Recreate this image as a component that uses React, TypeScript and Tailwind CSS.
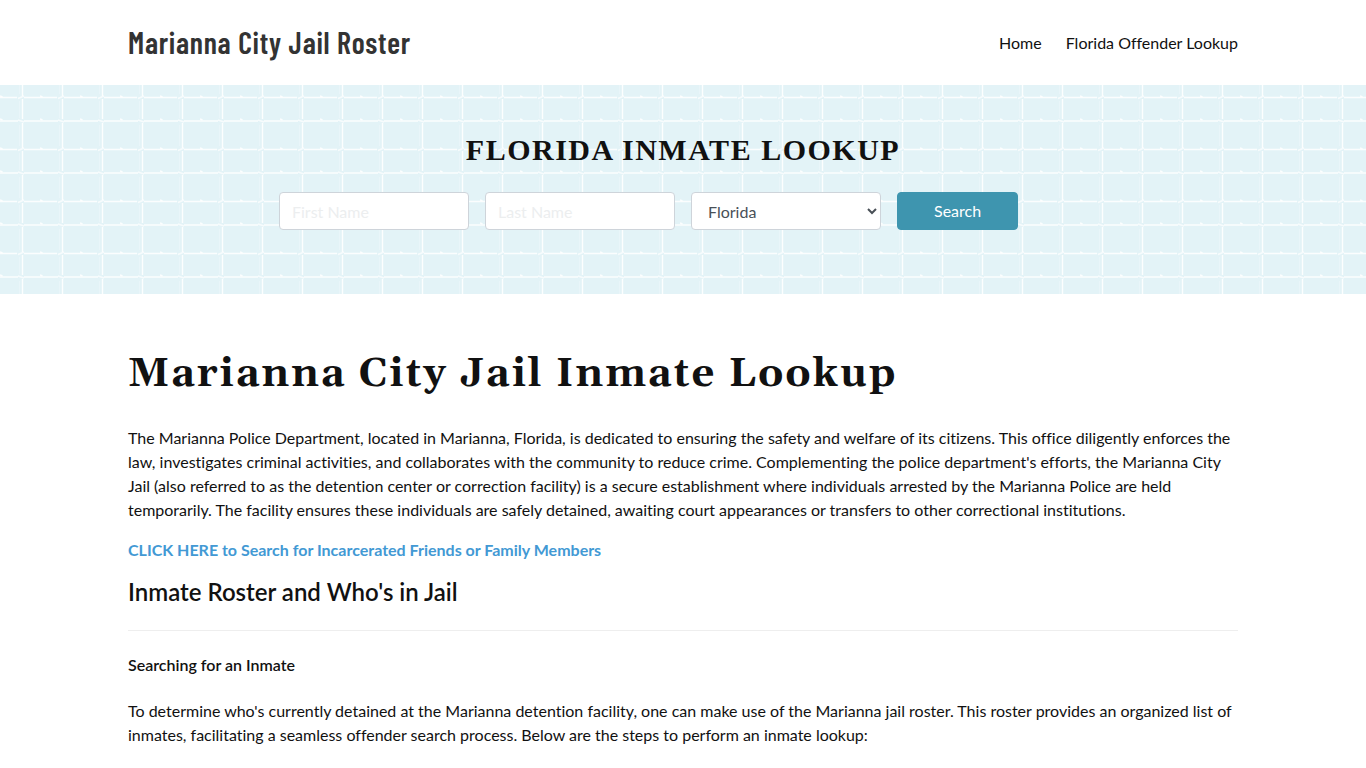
import { useState } from 'react';

const navLinks = [
  { label: 'Home', href: '#home' },
  { label: 'Florida Offender Lookup', href: '#lookup' },
];

const states = ['Alabama', 'Florida', 'Georgia', 'Louisiana', 'Mississippi', 'Texas'];

const fieldClass =
  'h-[38px] w-full min-w-0 rounded border border-[#ced4da] bg-white text-base text-[#495057] placeholder:text-[#eceeef] focus:border-[#3e95af] focus:outline-none';

// Repeating tile behind the search form
function TilePattern() {
  return (
    <svg className="absolute inset-0 h-full w-full" aria-hidden="true">
      <defs>
        <pattern id="tiles" width="40" height="52" patternUnits="userSpaceOnUse">
          <g fill="none" stroke="#fff">
            <path d="M22.5 0V11M22.5 14V34M22.5 38V52" strokeWidth="1.4" opacity="0.9" />
            <path d="M19.5 0V9M19.5 16V33M19.5 40V52" strokeWidth="1" opacity="0.2" />
            <path d="M24 12.5H40M0 12.5H17" strokeWidth="1.4" opacity="0.85" />
            <path d="M24 36H40M0 36H18" strokeWidth="1.4" opacity="0.85" />
            <path d="M18 13.5L24 11M18 35L24 37" strokeWidth="1.6" opacity="0.7" />
            <path d="M0 11L2.5 12M0 34L2.5 35" strokeWidth="1.6" opacity="0.9" />
          </g>
        </pattern>
      </defs>
      <rect width="100%" height="100%" fill="url(#tiles)" />
    </svg>
  );
}

export default function App() {
  const [firstName, setFirstName] = useState('');
  const [lastName, setLastName] = useState('');
  const [region, setRegion] = useState('Florida');

  return (
    <div className="min-h-screen bg-white font-['Lato','Liberation_Sans',sans-serif] text-base text-[#111] [font-variant-ligatures:no-common-ligatures]">
      <header className="mx-auto flex h-[85px] max-w-[1140px] items-center justify-between px-[15px]">
        <a
          href="#home"
          className="pb-0.5 font-['Barlow_Condensed','Roboto_Condensed','Liberation_Sans_Narrow',sans-serif] text-[30px] leading-9 font-semibold tracking-wide text-[#333]"
        >
          Marianna City Jail Roster
        </a>
        <nav className="flex gap-6">
          {navLinks.map((link) => (
            <a key={link.label} href={link.href} className="hover:text-[#3e95af]">
              {link.label}
            </a>
          ))}
        </nav>
      </header>

      <section className="relative bg-[#e3f3f7] pt-12 pb-16">
        <TilePattern />
        <div className="relative mx-auto max-w-[824px] px-2">
          <h2 className="mb-[26px] text-center font-['Liberation_Serif',serif] text-[30px] leading-[33px] font-bold tracking-wider uppercase">
            Florida Inmate Lookup
          </h2>
          <form className="grid grid-cols-4 gap-4" onSubmit={(e) => e.preventDefault()}>
            <input
              type="text"
              aria-label="First Name"
              placeholder="First Name"
              value={firstName}
              onChange={(e) => setFirstName(e.target.value)}
              className={`${fieldClass} px-3`}
            />
            <input
              type="text"
              aria-label="Last Name"
              placeholder="Last Name"
              value={lastName}
              onChange={(e) => setLastName(e.target.value)}
              className={`${fieldClass} px-3`}
            />
            <select
              aria-label="State"
              value={region}
              onChange={(e) => setRegion(e.target.value)}
              className={`${fieldClass} pl-3`}
            >
              {states.map((s) => (
                <option key={s}>{s}</option>
              ))}
            </select>
            <button
              type="submit"
              className="h-[38px] justify-self-start rounded border border-[#3e95af] bg-[#3e95af] px-9 text-white hover:bg-[#347f96]"
            >
              Search
            </button>
          </form>
        </div>
      </section>

      <main className="mx-auto max-w-[1140px] px-[15px] pt-[53px] pb-4">
        <h1 className="mb-[23px] font-['Gelasio',Georgia,'Liberation_Serif',serif] text-[40px] leading-[56px] font-bold tracking-wider">
          Marianna City Jail Inmate Lookup
        </h1>
        <p className="mb-4">
          The Marianna Police Department, located in Marianna, Florida, is dedicated to ensuring the safety and
          welfare of its citizens. This office diligently enforces the law, investigates criminal activities, and
          collaborates with the community to reduce crime. Complementing the police department's efforts, the
          Marianna City Jail (also referred to as the detention center or correction facility) is a secure
          establishment where individuals arrested by the Marianna Police are held temporarily. The facility ensures
          these individuals are safely detained, awaiting court appearances or transfers to other correctional
          institutions.
        </p>
        <p className="mb-4">
          <a href="#search" className="font-bold text-[#4299d4] hover:underline">
            CLICK HERE to Search for Incarcerated Friends or Family Members
          </a>
        </p>
        <h2 className="mb-6 text-2xl leading-7 font-semibold">Inmate Roster and Who's in Jail</h2>
        <hr className="mb-[22px] border-[#eee]" />
        <h3 className="mb-[22px] font-semibold">Searching for an Inmate</h3>
        <p>
          To determine who's currently detained at the Marianna detention facility, one can make use of the Marianna
          jail roster. This roster provides an organized list of inmates, facilitating a seamless offender search
          process. Below are the steps to perform an inmate lookup:
        </p>
      </main>
    </div>
  );
}
